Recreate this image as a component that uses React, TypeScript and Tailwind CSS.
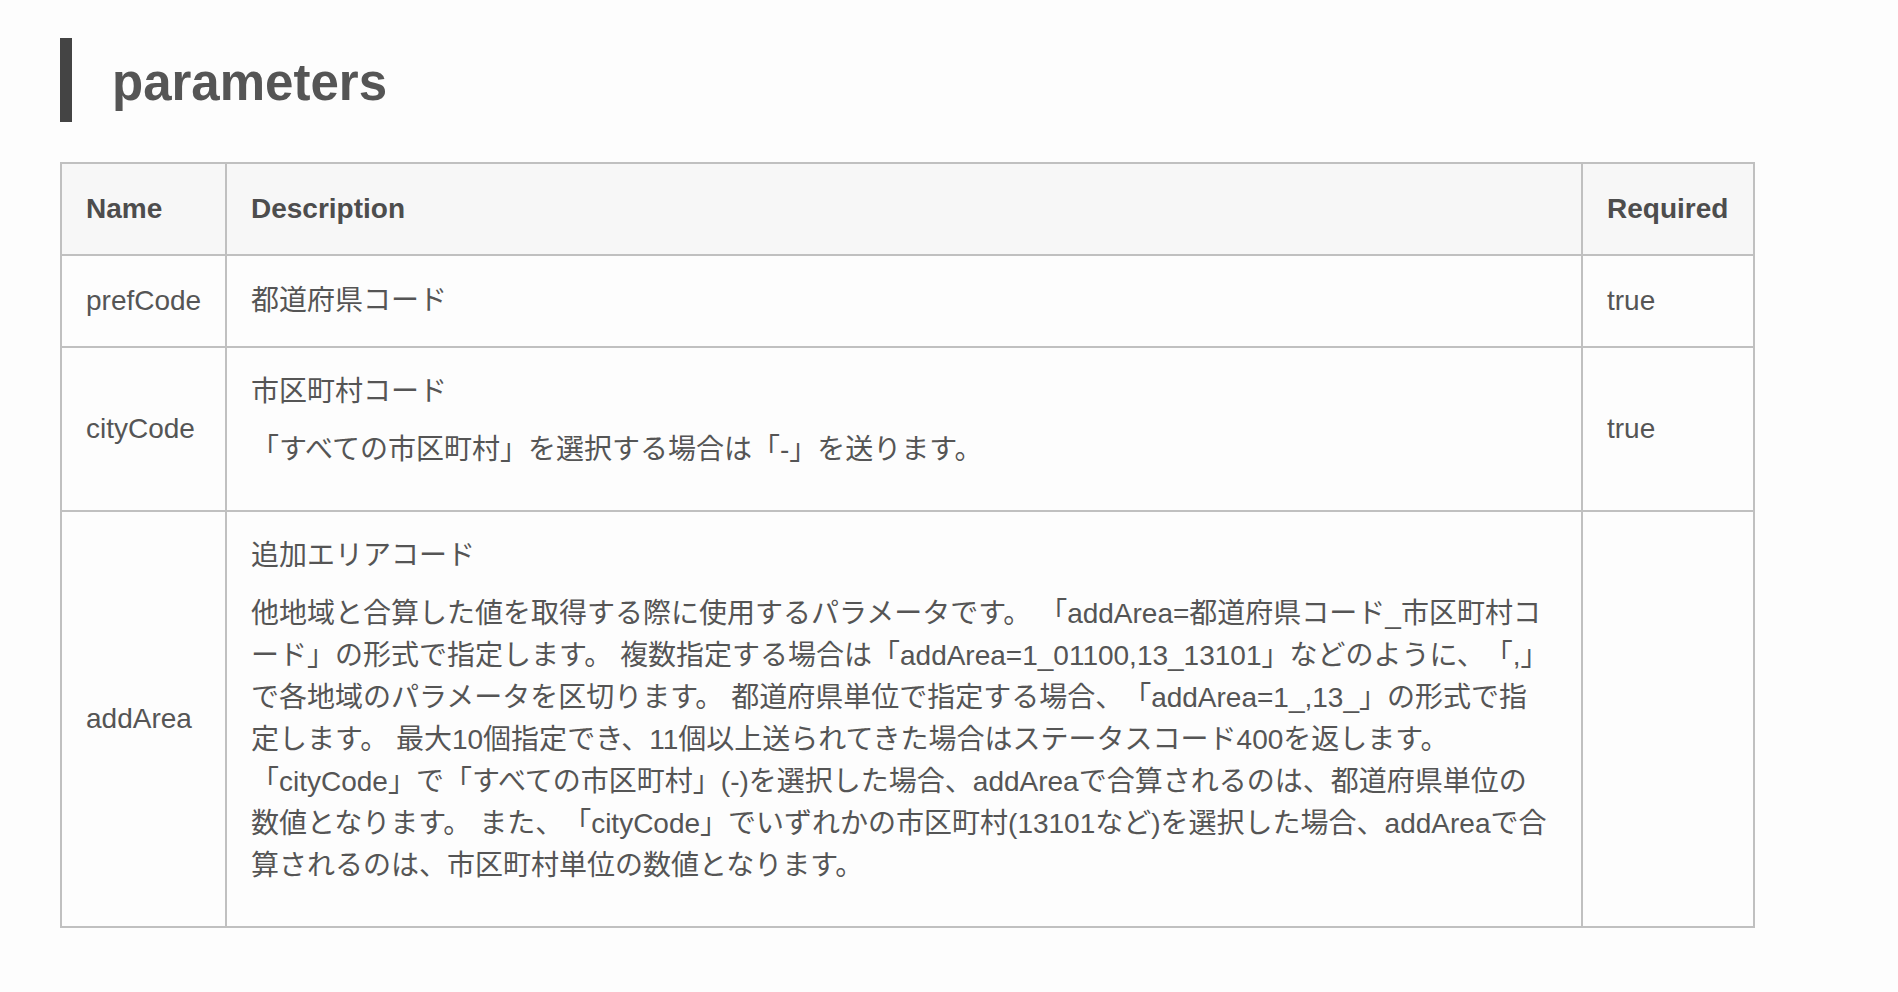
const FONT = "font-['Liberation_Sans','Noto_Sans_CJK_JP',sans-serif]";

// lines as they wrap in the original page
const ADD_AREA_LINES = [
  "他地域と合算した値を取得する際に使用するパラメータです。 「addArea=都道府県コード_市区町村コ",
  "ード」の形式で指定します。 複数指定する場合は「addArea=1_01100,13_13101」などのように、「,」",
  "で各地域のパラメータを区切ります。 都道府県単位で指定する場合、「addArea=1_,13_」の形式で指",
  "定します。 最大10個指定でき、11個以上送られてきた場合はステータスコード400を返します。",
  "「cityCode」で「すべての市区町村」(-)を選択した場合、addAreaで合算されるのは、都道府県単位の",
  "数値となります。 また、「cityCode」でいずれかの市区町村(13101など)を選択した場合、addAreaで合",
  "算されるのは、市区町村単位の数値となります。",
];

const ROWS = [
  { name: "prefCode", title: "都道府県コード", body: null as string[] | null, required: "true" },
  { name: "cityCode", title: "市区町村コード", body: ["「すべての市区町村」を選択する場合は「-」を送ります。"], required: "true" },
  { name: "addArea", title: "追加エリアコード", body: ADD_AREA_LINES, required: "" },
];

export default function App() {
  return (
    <div className={`min-h-screen bg-[#fdfdfd] pl-[60px] pt-[38px] text-[28px] leading-[42px] text-[#555] [text-spacing-trim:space-all] ${FONT}`}>
      {/* section heading */}
      <h2 className="h-[84px] border-l-[12px] border-[#444] pl-[40px] pt-[6px] text-[51px] font-bold leading-[78px] text-[#555]">
        parameters
      </h2>

      <table className="mt-[40px] w-[1695px] table-fixed border-collapse">
        <colgroup>
          <col className="w-[165px]" />
          <col />
          <col className="w-[172px]" />
        </colgroup>
        <thead>
          <tr className="bg-[#f7f7f7] text-left text-[#4d4d4d]">
            <th className="border-2 border-[#c0c0c0] px-[24px] py-[24px] font-bold">Name</th>
            <th className="border-2 border-[#c0c0c0] px-[24px] py-[24px] font-bold">Description</th>
            <th className="border-2 border-[#c0c0c0] px-[24px] py-[24px] font-bold">Required</th>
          </tr>
        </thead>
        <tbody>
          {ROWS.map((row) => (
            <tr key={row.name} className="bg-[#fdfdfd]">
              <td className="border-2 border-[#c0c0c0] px-[24px] py-[24px] align-middle">{row.name}</td>
              {row.body ? (
                <td className="border-2 border-[#c0c0c0] px-[24px] pt-[23px] pb-[39px] align-middle">
                  <p className="mb-[16px]">{row.title}</p>
                  <p>
                    {row.body.map((line) => (
                      <span key={line} className="block whitespace-nowrap">
                        {line}
                      </span>
                    ))}
                  </p>
                </td>
              ) : (
                <td className="border-2 border-[#c0c0c0] px-[24px] py-[24px] align-middle">{row.title}</td>
              )}
              <td className="border-2 border-[#c0c0c0] px-[24px] py-[24px] align-middle">{row.required}</td>
            </tr>
          ))}
        </tbody>
      </table>
    </div>
  );
}
